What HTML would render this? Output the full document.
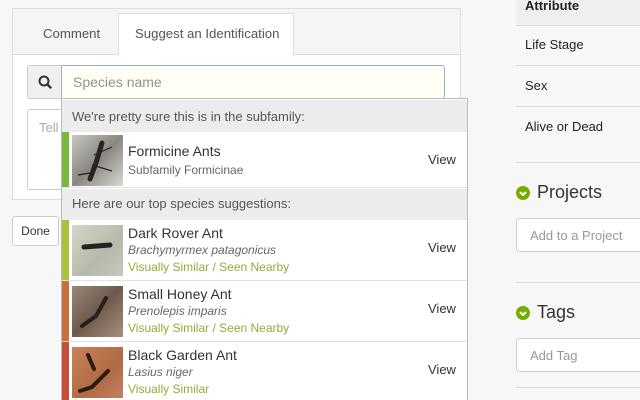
<!DOCTYPE html>
<html style="width:640px;height:400px;overflow:hidden"><head><meta charset="utf-8"><style>
*{box-sizing:border-box;margin:0;padding:0}
body{width:640px;height:400px;overflow:hidden;background:#f7f7f7;font-family:"Liberation Sans",sans-serif;color:#333;position:relative}
.a{position:absolute}
.card{left:12px;top:8px;width:449px;height:192px;background:#fff;border:1px solid #ddd}
.tabbar{left:13px;top:9px;width:447px;height:46px;background:#f5f5f5;border-bottom:1px solid #ddd}
.tab{font-size:13.2px;color:#555}
.atab{left:118px;top:13px;width:176px;height:43px;background:#fff;border:1px solid #ddd;border-bottom:none}
.sicon{left:27px;top:65px;width:35px;height:34px;background:#f0f0f0;border:1px solid #ccc;border-right:none;border-radius:3px 0 0 3px}
.inp{left:61px;top:65px;width:384px;height:34px;background:#fffff5;border:1px solid #8fb5c6;border-radius:0 3px 3px 0;font-size:14px;color:#8a9a8a;padding:8px 0 0 11px}
.ta{left:27px;top:109px;width:40px;height:81px;border:1px solid #ccc;border-radius:3px;background:#fff;font-size:13px;color:#aaa;padding:10px 0 0 11px}
.done{left:12px;top:216px;width:47px;height:30px;background:#fff;border:1px solid #ccc;border-radius:3px;font-size:12px;color:#333;text-align:center;line-height:28px}
.dd{left:61px;top:98px;width:407px;height:302px;background:#fff;border:1px solid #bbb;border-bottom:none;overflow:hidden}
.hd{position:absolute;left:0;width:405px;background:#ececec;font-size:13px;color:#555;padding-left:10px}
.row{position:absolute;left:0;width:405px;background:#fff;border-bottom:1px solid #e2e2e2}
.bar{position:absolute;left:0;top:0;width:7px;height:100%}
.img{position:absolute;left:10px;width:51px;height:51px}
.t{position:absolute;left:66px;font-size:14px;color:#333;white-space:nowrap}
.s{position:absolute;left:66px;font-size:12px;color:#666;font-style:italic;white-space:nowrap}
.g{position:absolute;left:66px;font-size:12px;color:#9aa838;white-space:nowrap}
.v{position:absolute;left:366px;font-size:13px;color:#333}
.rp{left:516px;width:124px;font-size:13px;color:#222}
.ln{left:516px;width:124px;height:1px;background:#ddd}
.ri{left:516px;width:130px;height:34px;border:1px solid #ccc;border-radius:3px;background:#fff;font-size:13px;color:#999;padding:9px 0 0 13px}
.h2{font-size:18px;color:#333}
.ck{width:14px;height:14px;border-radius:50%;background:#74ac00}
</style></head><body>
<div class="a card"></div>
<div class="a tabbar"></div>
<div class="a atab"></div>
<div class="a tab" style="left:43px;top:26px">Comment</div>
<div class="a tab" style="left:135px;top:26px">Suggest an Identification</div>
<div class="a sicon"><svg width="34" height="32" viewBox="0 0 34 32"><circle cx="16" cy="15" r="4.5" fill="none" stroke="#333" stroke-width="2"/><line x1="19.3" y1="18.3" x2="22.5" y2="21.5" stroke="#333" stroke-width="2.4" stroke-linecap="round"/></svg></div>
<div class="a inp">Species name</div>
<div class="a ta">Tell</div>
<div class="a done">Done</div>
<div class="a dd">
 <div class="hd" style="top:1px;height:32px;line-height:33px">We're pretty sure this is in the subfamily:</div>
 <div class="row" style="top:33px;height:56px"><div class="bar" style="background:#78b83c"></div>
  <div class="img" style="top:3px;background:linear-gradient(135deg,#c8c8c4,#8a8680 50%,#d8d8d4)"><svg width="51" height="51"><path d="M30 8 L24 28 L18 44" stroke="#2a2420" stroke-width="5" fill="none" stroke-linecap="round"/><path d="M22 20 L40 12 M20 30 L40 36 M18 38 L6 40" stroke="#2a2420" stroke-width="1.2"/></svg></div>
  <div class="t" style="top:11px">Formicine Ants</div>
  <div class="s" style="top:31px;font-style:normal">Subfamily Formicinae</div>
  <div class="v" style="top:20px">View</div></div>
 <div class="hd" style="top:90px;height:31px;line-height:30px">Here are our top species suggestions:</div>
 <div class="row" style="top:121px;height:61px"><div class="bar" style="background:#a9c23c"></div>
  <div class="img" style="top:5px;background:linear-gradient(135deg,#d4d6c8,#b6b8aa 60%,#c8c8bc)"><svg width="51" height="51"><path d="M12 22 L38 20" stroke="#222" stroke-width="5" stroke-linecap="round"/></svg></div>
  <div class="t" style="top:5px">Dark Rover Ant</div>
  <div class="s" style="top:23px">Brachymyrmex patagonicus</div>
  <div class="g" style="top:40px">Visually Similar / Seen Nearby</div>
  <div class="v" style="top:20px">View</div></div>
 <div class="row" style="top:182px;height:61px"><div class="bar" style="background:#c7703e"></div>
  <div class="img" style="top:5px;background:linear-gradient(135deg,#9a8678,#6e5a4c 50%,#a89080)"><svg width="51" height="51"><path d="M34 12 L24 30 L10 40" stroke="#2a1e18" stroke-width="4" fill="none" stroke-linecap="round"/></svg></div>
  <div class="t" style="top:5px">Small Honey Ant</div>
  <div class="s" style="top:23px">Prenolepis imparis</div>
  <div class="g" style="top:40px">Visually Similar / Seen Nearby</div>
  <div class="v" style="top:20px">View</div></div>
 <div class="row" style="top:243px;height:60px;border-bottom:none"><div class="bar" style="background:#c94e3a"></div>
  <div class="img" style="top:5px;background:linear-gradient(135deg,#c8825a,#b06a44 60%,#c48060)"><svg width="51" height="51"><path d="M16 8 L22 22 M36 24 L20 40 L8 44" stroke="#2a1a10" stroke-width="4" fill="none" stroke-linecap="round"/></svg></div>
  <div class="t" style="top:5px">Black Garden Ant</div>
  <div class="s" style="top:23px">Lasius niger</div>
  <div class="g" style="top:40px">Visually Similar</div>
  <div class="v" style="top:20px">View</div></div>
</div>
<div class="a rp" style="top:0;height:25px;background:#efefef;font-weight:bold;padding:0 0 0 9px;line-height:12px">Attribute</div>
<div class="a ln" style="top:25px"></div>
<div class="a rp" style="top:37px;left:525px">Life Stage</div>
<div class="a ln" style="top:65px"></div>
<div class="a rp" style="top:78px;left:525px">Sex</div>
<div class="a ln" style="top:106px"></div>
<div class="a rp" style="top:119px;left:525px">Alive or Dead</div>
<div class="a ln" style="top:162px"></div>
<div class="a ck" style="left:516px;top:186px"><svg width="14" height="14"><path d="M4 6 L7 9 L10 6" stroke="#fff" stroke-width="2" fill="none"/></svg></div>
<div class="a h2" style="left:537px;top:182px">Projects</div>
<div class="a ri" style="top:218px">Add to a Project</div>
<div class="a ln" style="top:282px"></div>
<div class="a ck" style="left:516px;top:306px"><svg width="14" height="14"><path d="M4 6 L7 9 L10 6" stroke="#fff" stroke-width="2" fill="none"/></svg></div>
<div class="a h2" style="left:537px;top:302px">Tags</div>
<div class="a ri" style="top:338px">Add Tag</div>
<div class="a ln" style="top:387px"></div>
</body></html>
